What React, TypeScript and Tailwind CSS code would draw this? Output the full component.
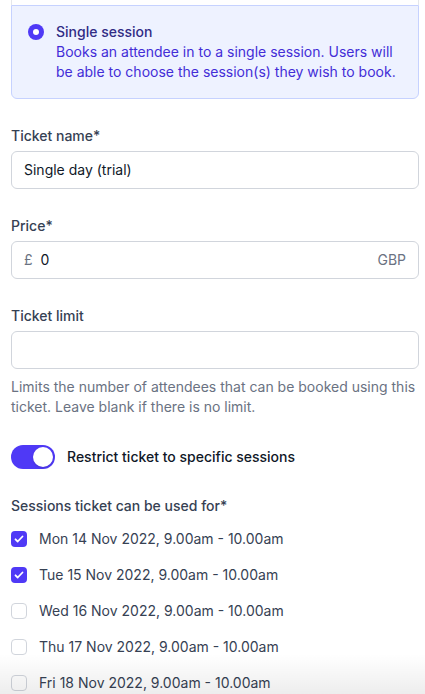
import { useState } from 'react';

const sessions = [
  { label: 'Mon 14 Nov 2022, 9.00am - 10.00am', checked: true },
  { label: 'Tue 15 Nov 2022, 9.00am - 10.00am', checked: true },
  { label: 'Wed 16 Nov 2022, 9.00am - 10.00am', checked: false },
  { label: 'Thu 17 Nov 2022, 9.00am - 10.00am', checked: false },
  { label: 'Fri 18 Nov 2022, 9.00am - 10.00am', checked: false },
];

function Checkbox({ checked, onToggle }: { checked: boolean; onToggle: () => void }) {
  return (
    <button
      type="button"
      onClick={onToggle}
      className={`flex h-4 w-4 flex-none items-center justify-center rounded ${
        checked ? 'bg-indigo-600' : 'border border-gray-300 bg-white'
      }`}
    >
      {checked && (
        <svg viewBox="0 0 16 16" className="h-4 w-4" fill="none">
          <path d="M4.5 8.3l2.2 2.2 4.8-5" stroke="white" strokeWidth="1.8" strokeLinecap="round" strokeLinejoin="round" />
        </svg>
      )}
    </button>
  );
}

export default function App() {
  const [restrict, setRestrict] = useState(true);
  const [checks, setChecks] = useState(sessions.map((s) => s.checked));

  return (
    <div className="relative h-[694px] overflow-hidden bg-white pl-[11px] pr-[6px] font-['Inter',sans-serif] text-sm leading-5">
      {/* Radio group: previous option peeks in at the top */}
      <div className="h-[5px] border-x border-gray-200 bg-white" />
      <div className="flex rounded-b-md border border-indigo-200 bg-indigo-50 p-4">
        <span className="mt-0.5 flex h-4 w-4 flex-none items-center justify-center rounded-full bg-indigo-600">
          <span className="h-1.5 w-1.5 rounded-full bg-white" />
        </span>
        <div className="ml-3">
          <p className="font-medium text-indigo-900">Single session</p>
          <p className="text-indigo-700">
            Books an attendee in to a single session. Users will be able to choose the session(s) they wish to book.
          </p>
        </div>
      </div>

      {/* Ticket name */}
      <div className="mt-[27px]">
        <label className="block font-medium text-gray-700">Ticket name*</label>
        <div className="mt-[5px] rounded-md border border-gray-300 px-3 py-2 text-gray-900">Single day (trial)</div>
      </div>

      {/* Price */}
      <div className="mt-[27px]">
        <label className="block font-medium text-gray-700">Price*</label>
        <div className="mt-[5px] flex items-center rounded-md border border-gray-300 px-3 py-2">
          <span className="text-gray-500">£</span>
          <span className="ml-2 flex-1 text-gray-900">0</span>
          <span className="text-gray-500">GBP</span>
        </div>
      </div>

      {/* Ticket limit */}
      <div className="mt-[27px]">
        <label className="block font-medium text-gray-700">Ticket limit</label>
        <div className="mt-[5px] h-[38px] rounded-md border border-gray-300" />
        <p className="mt-2 text-gray-500">
          Limits the number of attendees that can be booked using this ticket. Leave blank if there is no limit.
        </p>
      </div>

      {/* Restrict toggle */}
      <div className="mt-7 flex items-center">
        <button
          type="button"
          onClick={() => setRestrict((r) => !r)}
          className={`relative inline-flex h-6 w-11 flex-none rounded-full border-2 border-transparent transition-colors ${
            restrict ? 'bg-indigo-600' : 'bg-gray-200'
          }`}
        >
          <span
            className={`inline-block h-5 w-5 rounded-full bg-white shadow transition-transform ${
              restrict ? 'translate-x-5' : 'translate-x-0'
            }`}
          />
        </button>
        <span className="ml-3 font-medium text-gray-900">Restrict ticket to specific sessions</span>
      </div>

      {/* Sessions */}
      <div className="mt-[27px]">
        <p className="font-medium text-gray-700">Sessions ticket can be used for*</p>
        <div className="mt-[13px] flex flex-col gap-4">
          {sessions.map((s, i) => (
            <div key={s.label} className="flex h-5 items-center">
              <Checkbox
                checked={checks[i]}
                onToggle={() => setChecks((c) => c.map((v, j) => (j === i ? !v : v)))}
              />
              <span className="ml-3 text-gray-700">{s.label}</span>
            </div>
          ))}
        </div>
      </div>

      {/* Scroll fade at the bottom */}
      <div className="pointer-events-none absolute inset-x-0 bottom-0 h-10 bg-gradient-to-b from-black/0 to-black/[0.07]" />
    </div>
  );
}
